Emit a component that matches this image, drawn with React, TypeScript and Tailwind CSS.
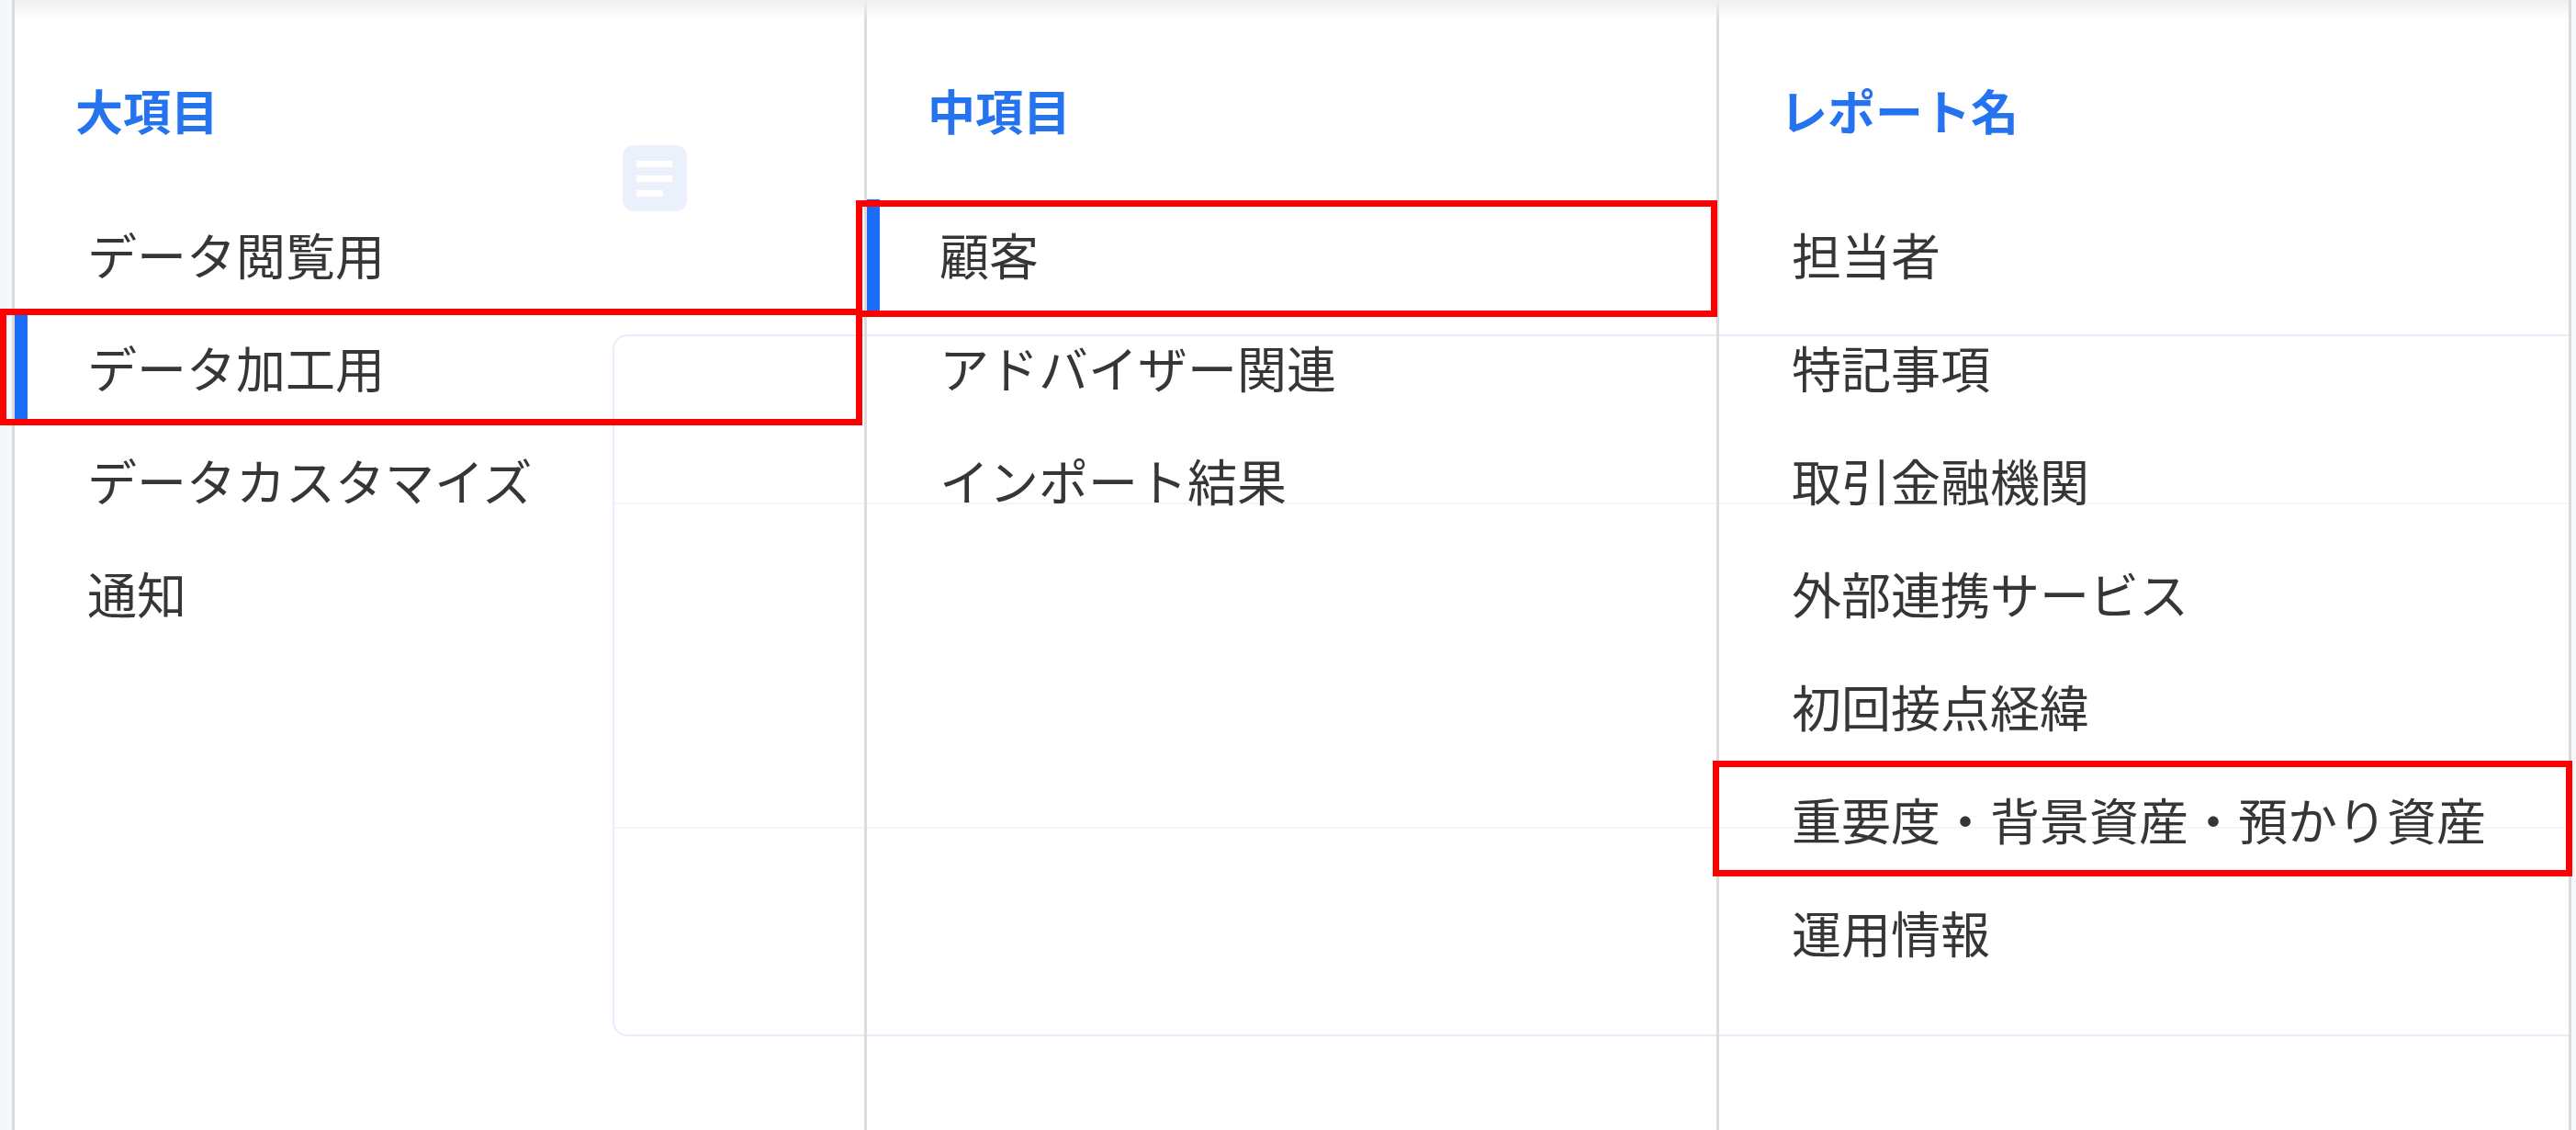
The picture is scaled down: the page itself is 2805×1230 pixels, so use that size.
import clsx from 'clsx';

type Column = {
  title: string;
  items: string[];
  selected: number;
};

const columns: Column[] = [
  {
    title: '大項目',
    items: ['データ閲覧用', 'データ加工用', 'データカスタマイズ', '通知'],
    selected: 1,
  },
  {
    title: '中項目',
    items: ['顧客', 'アドバイザー関連', 'インポート結果'],
    selected: 0,
  },
  {
    title: 'レポート名',
    items: [
      '担当者',
      '特記事項',
      '取引金融機関',
      '外部連携サービス',
      '初回接点経緯',
      '重要度・背景資産・預かり資産',
      '運用情報',
    ],
    selected: -1,
  },
];

// Faint page that shows through behind the menu
function GhostPage() {
  return (
    <div className="absolute inset-0 pointer-events-none">
      <div className="absolute left-[678px] top-[158px] w-[70px] h-[72px] rounded-[12px] bg-[#eaf1fd] flex flex-col justify-center gap-[9px] pl-[15px]">
        <div className="w-[39px] h-[7px] bg-white" />
        <div className="w-[39px] h-[7px] bg-white" />
        <div className="w-[29px] h-[7px] bg-white" />
      </div>
      <div className="absolute left-[667px] top-[364px] right-[-20px] h-[764px] rounded-[16px] border-2 border-[#e6eefb] flex flex-col">
        <div className="h-[183px] border-b-2 border-[#f3f6fb]" />
        <div className="h-[353px] border-b-2 border-[#f3f6fb]" />
      </div>
    </div>
  );
}

function MenuColumn({ column, first }: { column: Column; first: boolean }) {
  return (
    <div className={clsx('flex-1 basis-0 flex flex-col', !first && 'border-l-[3px] border-[#dcdcdc]')}>
      <div className="h-[217px] pl-[66px] pt-[90px] text-[52px] leading-[60px] font-bold text-[#2673f0]">
        {column.title}
      </div>
      {column.items.map((item, idx) => (
        <div
          key={item}
          className={clsx(
            'h-[123px] flex items-center pb-[5px] text-[54px] text-[#363636] whitespace-nowrap',
            idx === column.selected ? 'border-l-[14px] border-[#1b6cf6] pl-[65px]' : 'pl-[79px]'
          )}
        >
          {item}
        </div>
      ))}
    </div>
  );
}

export default function App() {
  return (
    <div
      className="relative w-[2805px] h-[1230px] bg-white overflow-hidden"
      style={{ fontFamily: '"Noto Sans CJK JP", "Noto Sans", sans-serif' }}
    >
      <GhostPage />

      <div className="relative flex h-full">
        <div className="w-[13px] bg-[#f4f7fc]" />
        <div className="flex-1 flex border-l-[3px] border-r-[3px] border-[#dadada]">
          {columns.map((col, i) => (
            <MenuColumn key={col.title} column={col} first={i === 0} />
          ))}
        </div>
        <div className="w-[5px] bg-[#f7f8fa]" />
      </div>

      {/* top shadow */}
      <div className="absolute left-[16px] right-[8px] top-0 h-[22px] bg-gradient-to-b from-[#efefef] to-transparent pointer-events-none" />

      {/* red annotation boxes */}
      <div className="absolute left-0 top-[336px] w-[939px] h-[127px] border-[7px] border-[#ff0000] pointer-events-none" />
      <div className="absolute left-[932px] top-[218px] w-[938px] h-[127px] border-[7px] border-[#ff0000] pointer-events-none" />
      <div className="absolute left-[1865px] top-[828px] w-[936px] h-[126px] border-[7px] border-[#ff0000] pointer-events-none" />
    </div>
  );
}
